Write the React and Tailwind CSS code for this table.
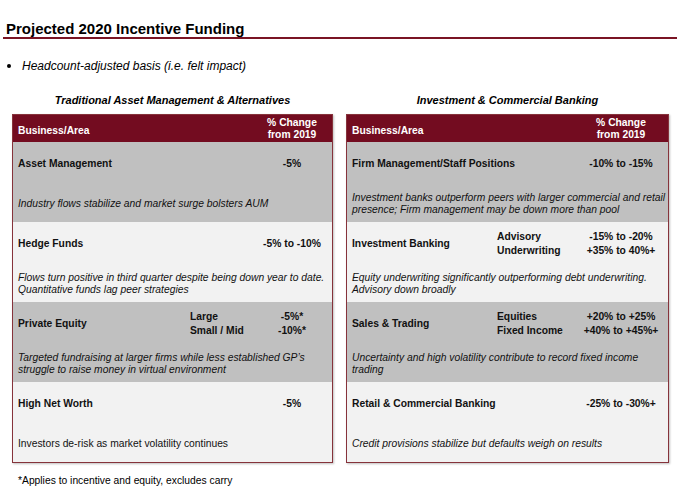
const leftRows = [
  {
    label: "Asset Management",
    value: "-5%",
    desc: ["Industry flows stabilize and market surge bolsters AUM"],
    bg: "bg-[#c0c0c0]",
  },
  {
    label: "Hedge Funds",
    value: "-5% to -10%",
    desc: [
      "Flows turn positive in third quarter despite being down year to date.",
      "Quantitative funds lag peer strategies",
    ],
    bg: "bg-[#f2f2f2]",
  },
  {
    label: "Private Equity",
    subs: [
      ["Large", "-5%*"],
      ["Small / Mid", "-10%*"],
    ],
    desc: [
      "Targeted fundraising at larger firms while less established GP\u2019s",
      "struggle to raise money in virtual environment",
    ],
    bg: "bg-[#c0c0c0]",
  },
  {
    label: "High Net Worth",
    value: "-5%",
    desc: ["Investors de-risk as market volatility continues"],
    upright: true,
    bg: "bg-[#f2f2f2]",
  },
];

const rightRows = [
  {
    label: "Firm Management/Staff Positions",
    value: "-10% to -15%",
    desc: [
      "Investment banks outperform peers with larger commercial and retail",
      "presence; Firm management may be down more than pool",
    ],
    bg: "bg-[#c0c0c0]",
  },
  {
    label: "Investment Banking",
    subs: [
      ["Advisory", "-15% to -20%"],
      ["Underwriting", "+35% to 40%+"],
    ],
    desc: [
      "Equity underwriting significantly outperforming debt underwriting.",
      "Advisory down broadly",
    ],
    bg: "bg-[#f2f2f2]",
  },
  {
    label: "Sales & Trading",
    subs: [
      ["Equities", "+20% to +25%"],
      ["Fixed Income", "+40% to +45%+"],
    ],
    desc: [
      "Uncertainty and high volatility contribute to record fixed income",
      "trading",
    ],
    bg: "bg-[#c0c0c0]",
  },
  {
    label: "Retail & Commercial Banking",
    value: "-25% to -30%+",
    desc: ["Credit provisions stabilize but defaults weigh on results"],
    bg: "bg-[#f2f2f2]",
  },
];

function Row({ row, labelW, padR }) {
  return (
    <div className={`h-[80px] flex flex-col pl-[5px] ${row.bg}`}>
      <div className={`h-[43px] flex items-center font-bold ${padR}`}>
        <div className={`${labelW} shrink-0 whitespace-nowrap`}>{row.label}</div>
        {row.subs ? (
          <>
            <div className="flex-1 flex flex-col leading-[14px]">
              {row.subs.map((s) => (
                <span key={s[0]}>{s[0]}</span>
              ))}
            </div>
            <div className="w-[70px] flex flex-col items-center leading-[14px] whitespace-nowrap">
              {row.subs.map((s) => (
                <span key={s[1]}>{s[1]}</span>
              ))}
            </div>
          </>
        ) : (
          <>
            <div className="flex-1" />
            <div className="w-[70px] text-center whitespace-nowrap">
              {row.value}
            </div>
          </>
        )}
      </div>
      <div
        className={`h-[37px] flex flex-col justify-center leading-[12px] whitespace-nowrap ${
          row.upright ? "" : "italic"
        }`}
      >
        {row.desc.map((d) => (
          <span key={d}>{d}</span>
        ))}
      </div>
    </div>
  );
}

function Table({ title, rows, width, labelW, padR }) {
  return (
    <div className={`flex flex-col ${width}`}>
      <h2 className="text-center text-[11px] leading-[13px] font-bold italic">
        {title}
      </h2>
      <div className="mt-[7px] border border-[#86333b] shadow-[1px_1px_2px_rgba(0,0,0,0.25)] text-[10.3px] text-[#111]">
        <div
          className={`h-[27px] flex items-center bg-[#730c20] text-white font-bold pl-[5px] ${padR}`}
        >
          <div className="flex-1 mt-[4px]">Business/Area</div>
          <div className="w-[70px] text-center leading-[11.5px]">
            % Change
            <br />
            from 2019
          </div>
        </div>
        {rows.map((r) => (
          <Row key={r.label} row={r} labelW={labelW} padR={padR} />
        ))}
      </div>
    </div>
  );
}

export default function App() {
  return (
    <div className="w-[681px] h-[496px] bg-white text-black font-['Liberation_Sans',Arial,sans-serif] overflow-hidden">
      <div className="ml-[3px] w-[674px] pt-[20px] pl-[3px] border-b-2 border-[#7a1424]">
        <h1 className="text-[15px] leading-[17px] font-bold">
          Projected 2020 Incentive Funding
        </h1>
      </div>

      <div className="mt-[20px] flex items-center h-[14px]">
        <span className="ml-[7px] w-[4px] h-[4px] rounded-full bg-black" />
        <span className="ml-[11px] text-[12px] leading-[14px] italic">
          Headcount-adjusted basis (i.e. felt impact)
        </span>
      </div>

      <div className="mt-[21px] ml-[12px] flex gap-[13px]">
        <Table
          title="Traditional Asset Management & Alternatives"
          rows={leftRows}
          width="w-[321px]"
          labelW="w-[172px]"
          padR="pr-[5px]"
        />
        <Table
          title="Investment & Commercial Banking"
          rows={rightRows}
          width="w-[323px]"
          labelW="w-[145px]"
          padR="pr-[12px]"
        />
      </div>

      <p className="mt-[12px] ml-[18px] text-[10.3px] leading-[12px]">
        *Applies to incentive and equity, excludes carry
      </p>
    </div>
  );
}
